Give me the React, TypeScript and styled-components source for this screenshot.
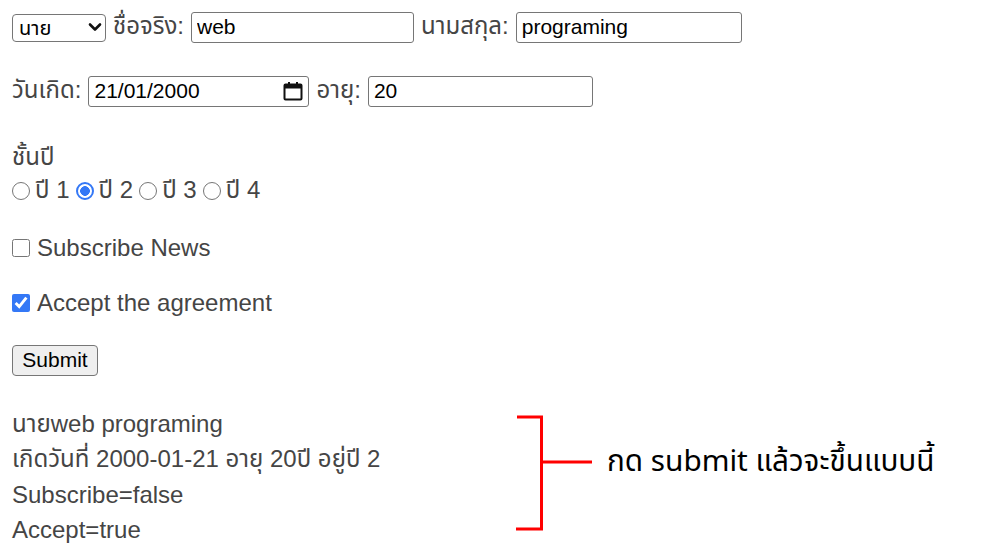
import React, { useState } from "react";
import styled, { createGlobalStyle } from "styled-components";

const GlobalStyle = createGlobalStyle`
  html, body { margin: 0; padding: 0; background: #ffffff; }
  body {
    font-family: "Liberation Sans", "Noto Sans Thai", "Noto Sans", Arial, sans-serif;
    font-size: 24px;
    color: #454545;
  }
`;

const Page = styled.div`
  padding: 0 12px;
  display: flex;
  flex-direction: column;
`;

const Row = styled.div<{ $mt: number; $h: number; $gap?: number }>`
  display: flex;
  align-items: center;
  margin-top: ${(p) => p.$mt}px;
  height: ${(p) => p.$h}px;
  gap: ${(p) => (p.$gap ?? 7)}px;
  white-space: nowrap;
`;

const Heading = styled.div<{ $mt: number }>`
  margin-top: ${(p) => p.$mt}px;
  height: 34px;
  line-height: 34px;
`;

const Label = styled.span`
  white-space: nowrap;
`;

const SelectWrap = styled.div`
  position: relative;
  width: 94px;
  height: 28px;
`;

const Select = styled.select`
  appearance: none;
  -webkit-appearance: none;
  width: 100%;
  height: 100%;
  box-sizing: border-box;
  border: 1px solid #767676;
  border-radius: 4px;
  background: #ffffff;
  color: #000;
  font-family: inherit;
  font-size: 20px;
  padding: 0 0 0 6px;
  margin: 0;
`;

const Overlay = styled.span<{ $right: number }>`
  position: absolute;
  right: ${(p) => p.$right}px;
  top: 50%;
  transform: translateY(-50%);
  display: flex;
  pointer-events: none;
`;

const TextInput = styled.input<{ $w: number }>`
  width: ${(p) => p.$w}px;
  height: 31px;
  box-sizing: border-box;
  border: 1px solid #767676;
  border-radius: 3px;
  padding: 1px 5px;
  margin: 0;
  font-family: inherit;
  font-size: 21px;
  color: #000;
  background: #fff;
  outline: none;
`;

const FieldWrap = styled.div`
  position: relative;
  display: flex;
`;

const Choice = styled.label<{ $gap: number }>`
  display: flex;
  align-items: center;
  gap: ${(p) => p.$gap}px;
`;

const Radio = styled.input.attrs({ type: "radio" })`
  appearance: none;
  -webkit-appearance: none;
  flex: none;
  width: 18px;
  height: 18px;
  margin: 0;
  box-sizing: border-box;
  border: 1px solid #767676;
  border-radius: 50%;
  background: #fff;

  &:checked {
    border: 2px solid #3478f6;
    background: radial-gradient(circle, #3478f6 0 4.6px, #ffffff 5px);
  }
`;

const Check = styled.input.attrs({ type: "checkbox" })`
  width: 18px;
  height: 18px;
  margin: 0;
  accent-color: #3478f6;
`;

const Button = styled.button`
  width: 86px;
  height: 31px;
  box-sizing: border-box;
  border: 1px solid #767676;
  border-radius: 4px;
  background: #efefef;
  color: #000;
  font-family: inherit;
  font-size: 21px;
  padding: 0;
  margin: 0;
`;

const ResultRow = styled.div`
  display: flex;
  margin-top: 29px;
`;

const Output = styled.div`
  width: 503px;
  display: flex;
  flex-direction: column;
`;

const OutLine = styled.div`
  height: 35.3px;
  line-height: 35.3px;
  white-space: nowrap;
`;

const Bracket = styled.svg`
  flex: none;
  margin-top: 8px;
`;

const Note = styled.div`
  margin-top: 34px;
  margin-left: 13px;
  height: 40px;
  line-height: 40px;
  font-family: "Noto Sans", "Noto Sans Thai", "DejaVu Sans", sans-serif;
  font-size: 29.7px;
  color: #000;
  white-space: nowrap;
`;

const Chevron = () => (
  <svg width="14" height="10" viewBox="0 0 14 10">
    <path d="M2 2.5 L7 7.5 L12 2.5" fill="none" stroke="#111" strokeWidth="2.6" strokeLinecap="round" strokeLinejoin="round" />
  </svg>
);

const CalendarIcon = () => (
  <svg width="20" height="20" viewBox="0 0 20 20">
    <rect x="1.5" y="3.5" width="17" height="15" rx="1" fill="none" stroke="#111" strokeWidth="2" />
    <rect x="1.5" y="3.5" width="17" height="4" fill="#111" />
    <rect x="5" y="1" width="2" height="4" fill="#111" />
    <rect x="13" y="1" width="2" height="4" fill="#111" />
  </svg>
);

export default function App() {
  const [title, setTitle] = useState("นาย");
  const [first, setFirst] = useState("web");
  const [last, setLast] = useState("programing");
  const [birth, setBirth] = useState("21/01/2000");
  const [age, setAge] = useState("20");
  const [year, setYear] = useState("2");
  const [subscribe, setSubscribe] = useState(false);
  const [accept, setAccept] = useState(true);

  const toIso = (d: string) => {
    const [dd, mm, yy] = d.split("/");
    return `${yy}-${mm}-${dd}`;
  };

  const [result, setResult] = useState({
    name: "นายweb programing",
    birth: "2000-01-21",
    age: "20",
    year: "2",
    subscribe: false,
    accept: true,
  });

  const submit = (e: React.FormEvent) => {
    e.preventDefault();
    setResult({
      name: `${title}${first} ${last}`,
      birth: toIso(birth),
      age,
      year,
      subscribe,
      accept,
    });
  };

  return (
    <>
      <GlobalStyle />
      <Page as="form" onSubmit={submit}>
        <Row $mt={11} $h={32}>
          <SelectWrap>
            <Select value={title} onChange={(e) => setTitle(e.target.value)}>
              <option value="นาย">นาย</option>
              <option value="นาง">นาง</option>
              <option value="นางสาว">นางสาว</option>
            </Select>
            <Overlay $right={4}>
              <Chevron />
            </Overlay>
          </SelectWrap>
          <Label>ชื่อจริง:</Label>
          <TextInput $w={223} value={first} onChange={(e) => setFirst(e.target.value)} />
          <Label>นามสกุล:</Label>
          <TextInput $w={226} value={last} onChange={(e) => setLast(e.target.value)} />
        </Row>

        <Row $mt={32} $h={32}>
          <Label>วันเกิด:</Label>
          <FieldWrap>
            <TextInput $w={221} value={birth} onChange={(e) => setBirth(e.target.value)} />
            <Overlay $right={6}>
              <CalendarIcon />
            </Overlay>
          </FieldWrap>
          <Label>อายุ:</Label>
          <TextInput $w={225} value={age} onChange={(e) => setAge(e.target.value)} />
        </Row>

        <Heading $mt={33}>ชั้นปี</Heading>
        <Row $mt={0} $h={34} $gap={6}>
          {["1", "2", "3", "4"].map((y) => (
            <Choice key={y} $gap={5}>
              <Radio name="year" value={y} checked={year === y} onChange={() => setYear(y)} />
              <span>ปี {y}</span>
            </Choice>
          ))}
        </Row>

        <Row $mt={23} $h={34}>
          <Choice $gap={7}>
            <Check checked={subscribe} onChange={(e) => setSubscribe(e.target.checked)} />
            <span>Subscribe News</span>
          </Choice>
        </Row>

        <Row $mt={21} $h={34}>
          <Choice $gap={7}>
            <Check checked={accept} onChange={(e) => setAccept(e.target.checked)} />
            <span>Accept the agreement</span>
          </Choice>
        </Row>

        <Row $mt={23} $h={34}>
          <Button type="submit">Submit</Button>
        </Row>

        <ResultRow>
          <Output>
            <OutLine>{result.name}</OutLine>
            <OutLine>
              เกิดวันที่ {result.birth} อายุ {result.age}ปี อยู่ปี {result.year}
            </OutLine>
            <OutLine>Subscribe={String(result.subscribe)}</OutLine>
            <OutLine>Accept={String(result.accept)}</OutLine>
          </Output>
          <Bracket width="79" height="118" viewBox="0 0 79 118">
            <path d="M2 3 H26.5 V115 H1 M26.5 48 H77" fill="none" stroke="#ff0000" strokeWidth="3" />
          </Bracket>
          <Note>กด submit แล้วจะขึ้นแบบนี้</Note>
        </ResultRow>
      </Page>
    </>
  );
}
